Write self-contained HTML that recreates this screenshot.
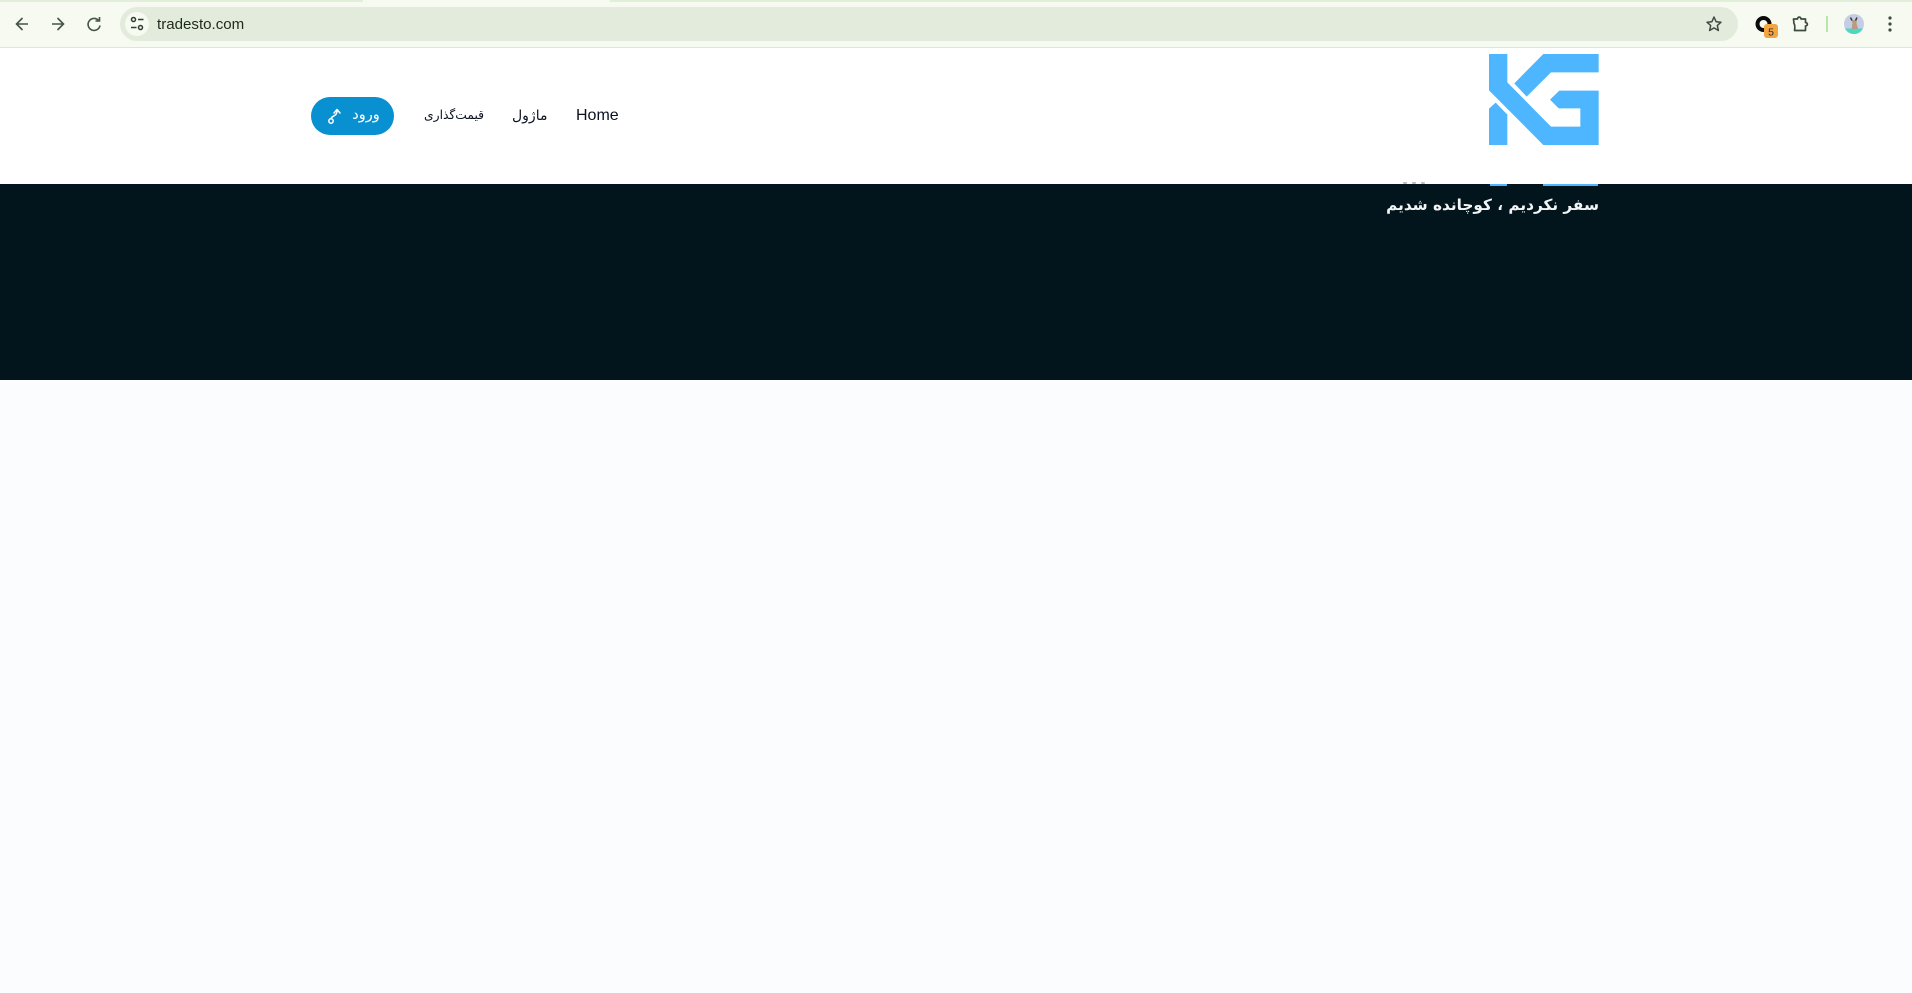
<!DOCTYPE html>
<html lang="fa">
<head>
<meta charset="utf-8">
<title>tradesto.com</title>
<style>
html,body{margin:0;padding:0;width:1912px;height:993px;overflow:hidden;background:#fbfcfe;font-family:"Liberation Sans","DejaVu Sans",sans-serif}
.a{position:absolute}
#chrome{left:0;top:0;width:1912px;height:47px;background:#f6faf0;border-bottom:1px solid #e0e4da}
#strip{left:0;top:0;width:363px;height:2px;background:#e1eeda}
#strip2{left:610px;top:0;width:1302px;height:2px;background:#e1eeda}
#omni{left:120px;top:7px;width:1618px;height:34px;border-radius:17px;background:#e3ecdc}
#lens{left:125px;top:12px;width:24px;height:24px;border-radius:50%;background:#f6faf0}
#url{left:157px;top:16px;font-size:15.1px;line-height:18px;color:#1f2a1f;white-space:nowrap}
#header{left:0;top:48px;width:1912px;height:136px;background:#fff}
#band{left:0;top:184px;width:1912px;height:196px;background:#02141c}
#btn{left:311px;top:97px;width:83px;height:38px;border-radius:19px;background:#0890d0}
.nav{white-space:nowrap;color:#0b1220;font-size:14px;line-height:20px}
#home{left:576px;top:106px;font-size:16px;line-height:20px;color:#0b1220}
#title{right:313px;top:192px;font-size:15.3px;line-height:26px;font-weight:700;color:#f2f4f5;white-space:nowrap;direction:rtl;font-family:"DejaVu Sans",sans-serif}
</style>
</head>
<body>
<div class="a" id="chrome"></div>
<div class="a" id="strip"></div>
<div class="a" id="strip2"></div>
<svg class="a" style="left:0;top:0" width="160" height="48" viewBox="0 0 160 48" fill="none" stroke="#47524a" stroke-width="1.6">
<path d="M28 24H17M22.5 18L16.5 24L22.5 30"/>
<path d="M52 24H63M57.5 18L63.5 24L57.5 30"/>
<path d="M98.6 20.5A6 6 0 1 0 100 25.5"/>
<path d="M99.5 17V21H95.5" />
</svg>
<div class="a" id="omni"></div>
<div class="a" id="lens"></div>
<svg class="a" style="left:125px;top:12px" width="24" height="24" viewBox="0 0 24 24" fill="none" stroke="#333d35" stroke-width="1.5">
<circle cx="8.5" cy="7.5" r="2"/><path d="M13 7.5H18.5"/>
<circle cx="15.5" cy="15.5" r="2"/><path d="M6 15.5H11.5"/>
</svg>
<div class="a" id="url">tradesto.com</div>
<svg class="a" style="left:1704px;top:14px" width="20" height="20" viewBox="0 0 20 20" fill="none" stroke="#3f4a42" stroke-width="1.5" stroke-linejoin="round">
<path d="M10 3L12.1 7.7L17 8.2L13.3 11.5L14.4 16.5L10 13.9L5.6 16.5L6.7 11.5L3 8.2L7.9 7.7Z"/>
</svg>
<svg class="a" style="left:1752px;top:12px" width="30" height="28" viewBox="0 0 30 28" fill="none">
<circle cx="11.5" cy="12" r="6" stroke="#0a0a0a" stroke-width="4"/>
<rect x="12" y="12" width="14" height="14" rx="3" fill="#f2a540"/>
<text x="19" y="23.5" font-size="10.5" text-anchor="middle" fill="#2b2b2b" font-family="Liberation Sans, sans-serif">5</text>
</svg>
<svg class="a" style="left:1790px;top:14px" width="22" height="22" viewBox="0 0 22 22" fill="none" stroke="#3d4a40" stroke-width="1.7" stroke-linejoin="round">
<path d="M3.5 5H7.5C7.5 2.5 11 2.5 11 5H15.5V8.5C18 8.5 18 12 15.5 12V16.5H4.5C5 14 5 11 3.8 9C4 7.5 3.5 6.5 3.5 5Z"/>
</svg>
<div class="a" style="left:1826px;top:16px;width:2px;height:16px;background:#b7e6a8"></div>
<svg class="a" style="left:1844px;top:14px" width="20" height="20" viewBox="0 0 20 20">
<defs><clipPath id="c"><circle cx="10" cy="10" r="10"/></clipPath></defs>
<g clip-path="url(#c)">
<rect width="20" height="20" fill="#c5cde6"/>
<rect y="14.5" width="20" height="6" fill="#4dd6c1"/>
<path d="M6.5 4L8.5 6H11L13 4L12.5 9L14 15H7.5L8.5 9Z" fill="#b89c80"/>
<path d="M6.5 3.5L8 6.5M13 3.5L11.5 6.5" stroke="#3a3230" stroke-width="1.4"/>
</g>
</svg>
<svg class="a" style="left:1884px;top:14px" width="12" height="20" viewBox="0 0 12 20" fill="#3d4a40">
<circle cx="6" cy="4" r="1.6"/><circle cx="6" cy="10" r="1.6"/><circle cx="6" cy="16" r="1.6"/>
</svg>

<div class="a" id="header"></div>
<div class="a" id="band"></div>
<div class="a" style="left:1490px;top:184px;width:17px;height:2px;background:#4db6fe"></div>
<div class="a" style="left:1543px;top:184px;width:55px;height:2px;background:#4db6fe"></div>
<div class="a" style="left:1403px;top:182px;width:4px;height:2px;background:#b8bcbf;border-radius:1px"></div>
<div class="a" style="left:1412px;top:182px;width:4px;height:2px;background:#b8bcbf;border-radius:1px"></div>
<div class="a" style="left:1421px;top:182px;width:4px;height:2px;background:#b8bcbf;border-radius:1px"></div>

<svg class="a" style="left:1480px;top:48.4px" width="130" height="104" viewBox="0 0 390 312" fill="#4db6fe">
<path d="M27 18H82V103L213 236H301V181H236L210 155L238 128H356V291H190L27 127Z"/>
<path d="M190 18H356V73H213L140 146L103 106Z"/>
<path d="M27 182L47 164L82 200V291H27Z"/>
</svg>

<div class="a" id="home">Home</div>
<div class="a nav" style="left:512px;top:105px;direction:rtl">ماژول</div>
<div class="a nav" style="left:424px;top:105px;direction:rtl;font-size:12.3px">قیمت‌گذاری</div>
<div class="a" id="btn"></div>
<svg class="a" style="left:326px;top:106px" width="18" height="20" viewBox="0 0 18 20" fill="none" stroke="#fff" stroke-width="1.5" stroke-linecap="round" stroke-linejoin="round">
<circle cx="5" cy="15" r="2.2"/>
<path d="M5 12.7C6 9 11 11 11 4.5M8 7L11 3.5L14 7"/>
</svg>
<div class="a" style="left:351px;top:105px;width:30px;text-align:center;color:#fff;font-size:14.5px;line-height:20px;direction:rtl;white-space:nowrap">ورود</div>

<div class="a" id="title">سفر نکردیم ، کوچانده شدیم</div>
</body>
</html>
